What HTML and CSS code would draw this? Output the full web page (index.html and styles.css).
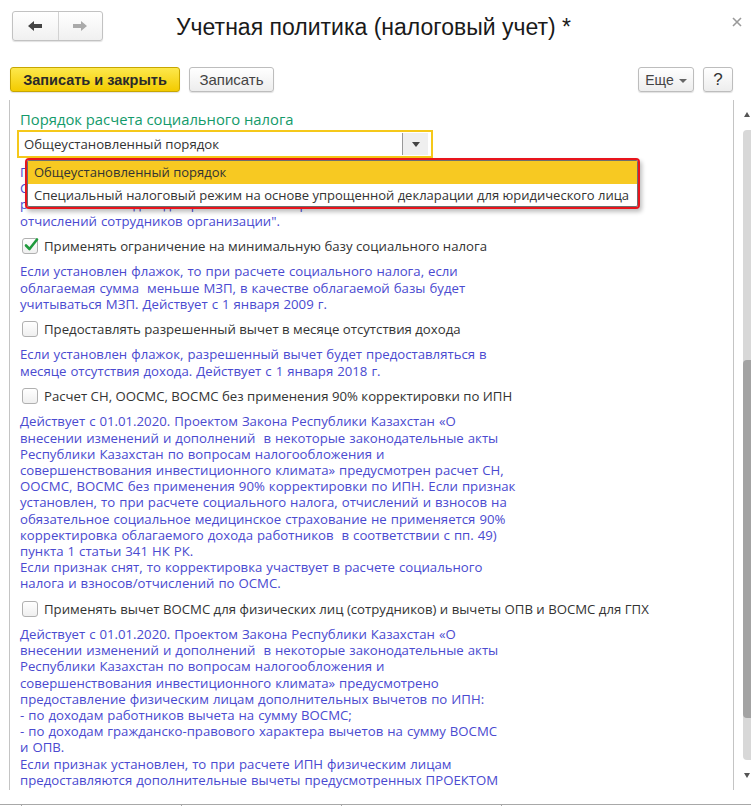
FILE: index.html
```html
<!DOCTYPE html>
<html lang="ru">
<head>
<meta charset="utf-8">
<title>Учетная политика (налоговый учет)</title>
<link rel="stylesheet" href="styles.css">
</head>
<body>
<div class="header">
  <div class="nav">
    <div class="nav-btn">
      <svg width="16" height="12" viewBox="0 0 16 12"><path d="M1 6 L7 1 L7 4 L15 4 L15 8 L7 8 L7 11 Z" fill="#444"/></svg>
    </div>
    <div class="nav-btn nav-btn-right">
      <svg width="16" height="12" viewBox="0 0 16 12"><path d="M15 6 L9 1 L9 4 L1 4 L1 8 L9 8 L9 11 Z" fill="#aaa"/></svg>
    </div>
  </div>
  <div class="title">Учетная политика (налоговый учет) *</div>
  <div class="close">
    <svg width="10" height="10" viewBox="0 0 10 10"><path d="M1 1 L9 9 M9 1 L1 9" stroke="#9a9a9a" stroke-width="1.6"/></svg>
  </div>
</div>

<div class="toolbar">
  <div class="btn btn-primary">Записать и закрыть</div>
  <div class="btn btn-save">Записать</div>
  <div class="spacer"></div>
  <div class="btn btn-more">Еще <span class="tri"></span></div>
  <div class="btn btn-help">?</div>
</div>

<div class="main">
  <div class="content">
    <div class="group-title">Порядок расчета социального налога</div>
    <div class="combo">
      <div class="combo-text">Общеустановленный порядок</div>
      <div class="combo-btn"><span class="tri-dark"></span></div>
    </div>
    <div class="para para-first">Порядок расчета социального налога определяет, каким образом<br>Специальный налоговый режим применяется при расчете социального<br>расчета налога с доходов работников по правилам "Расчета налогов и<br>отчислений сотрудников организации".</div>

    <div class="check-row">
      <div class="checkbox">
        <svg width="16" height="16" viewBox="0 0 16 16"><path d="M3 8.5 L6.5 12 L14 2.5" fill="none" stroke="#1f9a3c" stroke-width="2.6" stroke-linecap="round" stroke-linejoin="round"/></svg>
      </div>
      <div class="check-label">Применять ограничение на минимальную базу социального налога</div>
    </div>
    <div class="para">Если установлен флажок, то при расчете социального налога, если<br>облагаемая сумма&nbsp; меньше МЗП, в качестве облагаемой базы будет<br>учитываться МЗП. Действует с 1 января 2009 г.</div>

    <div class="check-row">
      <div class="checkbox"></div>
      <div class="check-label">Предоставлять разрешенный вычет в месяце отсутствия дохода</div>
    </div>
    <div class="para">Если установлен флажок, разрешенный вычет будет предоставляться в<br>месяце отсутствия дохода. Действует с 1 января 2018 г.</div>

    <div class="check-row">
      <div class="checkbox"></div>
      <div class="check-label">Расчет СН, ООСМС, ВОСМС без применения 90% корректировки по ИПН</div>
    </div>
    <div class="para">Действует с 01.01.2020. Проектом Закона Республики Казахстан «О<br>внесении изменений и дополнений&nbsp; в некоторые законодательные акты<br>Республики Казахстан по вопросам налогообложения и<br>совершенствования инвестиционного климата» предусмотрен расчет СН,<br>ООСМС, ВОСМС без применения 90% корректировки по ИПН. Если признак<br>установлен, то при расчете социального налога, отчислений и взносов на<br>обязательное социальное медицинское страхование не применяется 90%<br>корректировка облагаемого дохода работников&nbsp; в соответствии с пп. 49)<br>пункта 1 статьи 341 НК РК.<br>Если признак снят, то корректировка участвует в расчете социального<br>налога и взносов/отчислений по ОСМС.</div>

    <div class="check-row">
      <div class="checkbox"></div>
      <div class="check-label">Применять вычет ВОСМС для физических лиц (сотрудников) и вычеты ОПВ и ВОСМС для ГПХ</div>
    </div>
    <div class="para">Действует с 01.01.2020. Проектом Закона Республики Казахстан «О<br>внесении изменений и дополнений&nbsp; в некоторые законодательные акты<br>Республики Казахстан по вопросам налогообложения и<br>совершенствования инвестиционного климата» предусмотрено<br>предоставление физическим лицам дополнительных вычетов по ИПН:<br>- по доходам работников вычета на сумму ВОСМС;<br>- по доходам гражданско-правового характера вычетов на сумму ВОСМС<br>и ОПВ.<br>Если признак установлен, то при расчете ИПН физическим лицам<br>предоставляются дополнительные вычеты предусмотренных ПРОЕКТОМ<br>Закона.</div>

    <div class="popup">
      <div class="popup-item popup-item-selected">Общеустановленный порядок</div>
      <div class="popup-item">Специальный налоговый режим на основе упрощенной декларации для юридического лица</div>
    </div>
  </div>
  <div class="scroll">
    <div class="scroll-arrow"><span class="tri-up"></span></div>
    <div class="scroll-track"><div class="scroll-thumb"></div></div>
    <div class="scroll-arrow scroll-arrow-down"><span class="tri-down"></span></div>
  </div>
</div>

<div class="footer-line">
  <span class="tick"></span><span class="tick"></span><span class="tick"></span><span class="tick"></span>
</div>
</body>
</html>
```

FILE: styles.css
```css
html, body {
  margin: 0;
  padding: 0;
  background: #fff;
}
body {
  width: 751px;
  height: 806px;
  overflow: hidden;
  font-family: "Open Sans", Roboto, "Liberation Sans", Arial, sans-serif;
  font-size: 13.2px;
  color: #333;
}

/* header */
.header {
  display: flex;
  align-items: center;
  padding: 11px 0 0 12px;
  height: 30px;
}
.nav {
  display: flex;
  width: 89px;
  height: 28px;
  border: 1px solid #c2c2c2;
  border-radius: 3px;
  background: linear-gradient(#ffffff, #f0f0f0);
  box-shadow: 0 1px 1px rgba(0,0,0,0.12);
}
.nav-btn {
  width: 45px;
  display: flex;
  align-items: center;
  justify-content: center;
}
.nav-btn-right {
  width: 44px;
  border-left: 1px solid #d2d2d2;
}
.title {
  margin-left: 73px;
  margin-top: 2px;
  font-family: "Liberation Sans", Arial, sans-serif;
  font-size: 23px;
  color: #1a1a1a;
}
.close {
  align-self: flex-start;
  margin-left: auto;
  margin-right: 9px;
  margin-top: 6px;
  display: flex;
}

/* toolbar */
.toolbar {
  display: flex;
  align-items: center;
  gap: 9px;
  margin-top: 26px;
  padding: 0 18px 0 10px;
  height: 25px;
}
.btn {
  box-sizing: border-box;
  height: 25px;
  display: flex;
  align-items: center;
  justify-content: center;
  border: 1px solid #bdbdbd;
  border-radius: 3px;
  background: linear-gradient(#ffffff, #ededed);
  box-shadow: 0 1px 1px rgba(0,0,0,0.12);
  font-family: "Liberation Sans", Arial, sans-serif;
  font-size: 14px;
  color: #444;
}
.btn-primary {
  width: 170px;
  border-color: #c7a600;
  background: linear-gradient(#fde84c, #f3cb00);
  font-weight: bold;
  color: #2a2a2a;
  font-size: 14.5px;
}
.btn-save {
  width: 85px;
  font-size: 15px;
}
.spacer {
  flex: 1;
}
.btn-more {
  width: 56px;
  gap: 5px;
}
.tri {
  width: 0;
  height: 0;
  border-left: 4px solid transparent;
  border-right: 4px solid transparent;
  border-top: 4px solid #666;
  margin-top: 2px;
}
.btn-help {
  width: 30px;
  font-size: 17px;
  color: #333;
}

/* main */
.main {
  display: flex;
  margin-top: 8px;
  height: 690px;
}
.content {
  position: relative;
  margin-left: 9px;
  width: 713px;
  padding-left: 10px;
  border-left: 1px solid #c4c4c4;
  border-right: 1px solid #c4c4c4;
  overflow: hidden;
}
.group-title {
  margin-top: 10px;
  font-size: 14.8px;
  line-height: 18px;
  color: #139a6a;
}
.combo {
  box-sizing: border-box;
  display: flex;
  align-items: center;
  margin: 2px 0 0 -3px;
  width: 416px;
  height: 28px;
  border: 2px solid #f5c81a;
  background: #fff;
}
.combo-text {
  flex: 1;
  padding-left: 5px;
  color: #333;
}
.combo-btn {
  width: 25px;
  height: 22px;
  margin-right: 3px;
  border-left: 1px solid #999;
  background: #efefef;
  display: flex;
  align-items: center;
  justify-content: center;
}
.tri-dark {
  width: 0;
  height: 0;
  border-left: 4px solid transparent;
  border-right: 4px solid transparent;
  border-top: 5px solid #444;
}
.para {
  margin: 0;
  line-height: 16.2px;
  color: #4a4ad0;
  white-space: nowrap;
  word-spacing: 0.6px;
}
.para-first {
  margin-top: 6px;
}
.check-row {
  display: flex;
  align-items: center;
  height: 18px;
  margin: 8px 0 8.5px 2px;
  gap: 6px;
}
.checkbox {
  box-sizing: border-box;
  width: 16px;
  height: 16px;
  border: 1px solid #b0b0b0;
  border-radius: 3px;
  background: linear-gradient(#ffffff, #efefef);
  position: relative;
}
.checkbox svg {
  position: absolute;
  left: 0;
  top: -2px;
}
.check-label {
  color: #333;
  white-space: nowrap;
}

/* dropdown popup */
.popup {
  position: absolute;
  left: 15px;
  top: 58px;
  box-sizing: border-box;
  width: 615px;
  height: 51px;
  border: 2px solid #e8141c;
  border-radius: 4px;
  background: #fff;
  box-shadow: inset 0 0 0 1px #6e6e6e, 2px 3px 4px rgba(0,0,0,0.25);
  padding: 1px;
}
.popup-item {
  height: 23px;
  line-height: 22px;
  padding-left: 6px;
  font-size: 13px;
  color: #333;
  white-space: nowrap;
}
.popup-item-selected {
  background: #f7c922;
}

/* scrollbar */
.scroll {
  width: 17px;
  display: flex;
  flex-direction: column;
}
.scroll-arrow {
  height: 30px;
  display: flex;
  align-items: center;
  justify-content: flex-end;
  padding-right: 1px;
}
.tri-up {
  width: 0;
  height: 0;
  border-left: 3px solid transparent;
  border-right: 3px solid transparent;
  border-bottom: 5px solid #555;
}
.tri-down {
  width: 0;
  height: 0;
  border-left: 3px solid transparent;
  border-right: 3px solid transparent;
  border-top: 5px solid #555;
}
.scroll-track {
  margin-left: 9px;
  width: 8px;
  height: 632px;
  background: #d8d8d8;
  border-radius: 4px 0 0 4px;
  overflow: hidden;
}
.scroll-thumb {
  margin-top: 230px;
  height: 358px;
  background: #a3a3a3;
  border-radius: 4px 0 0 4px;
}
.scroll-arrow-down {
  height: 30px;
}

/* footer */
.footer-line {
  display: flex;
  gap: 159px;
  margin-top: 14px;
  padding-left: 21px;
  height: 2px;
  border-top: 1px solid #a8a8a8;
}
.tick {
  width: 1px;
  height: 2px;
  background: #a8a8a8;
}
```
